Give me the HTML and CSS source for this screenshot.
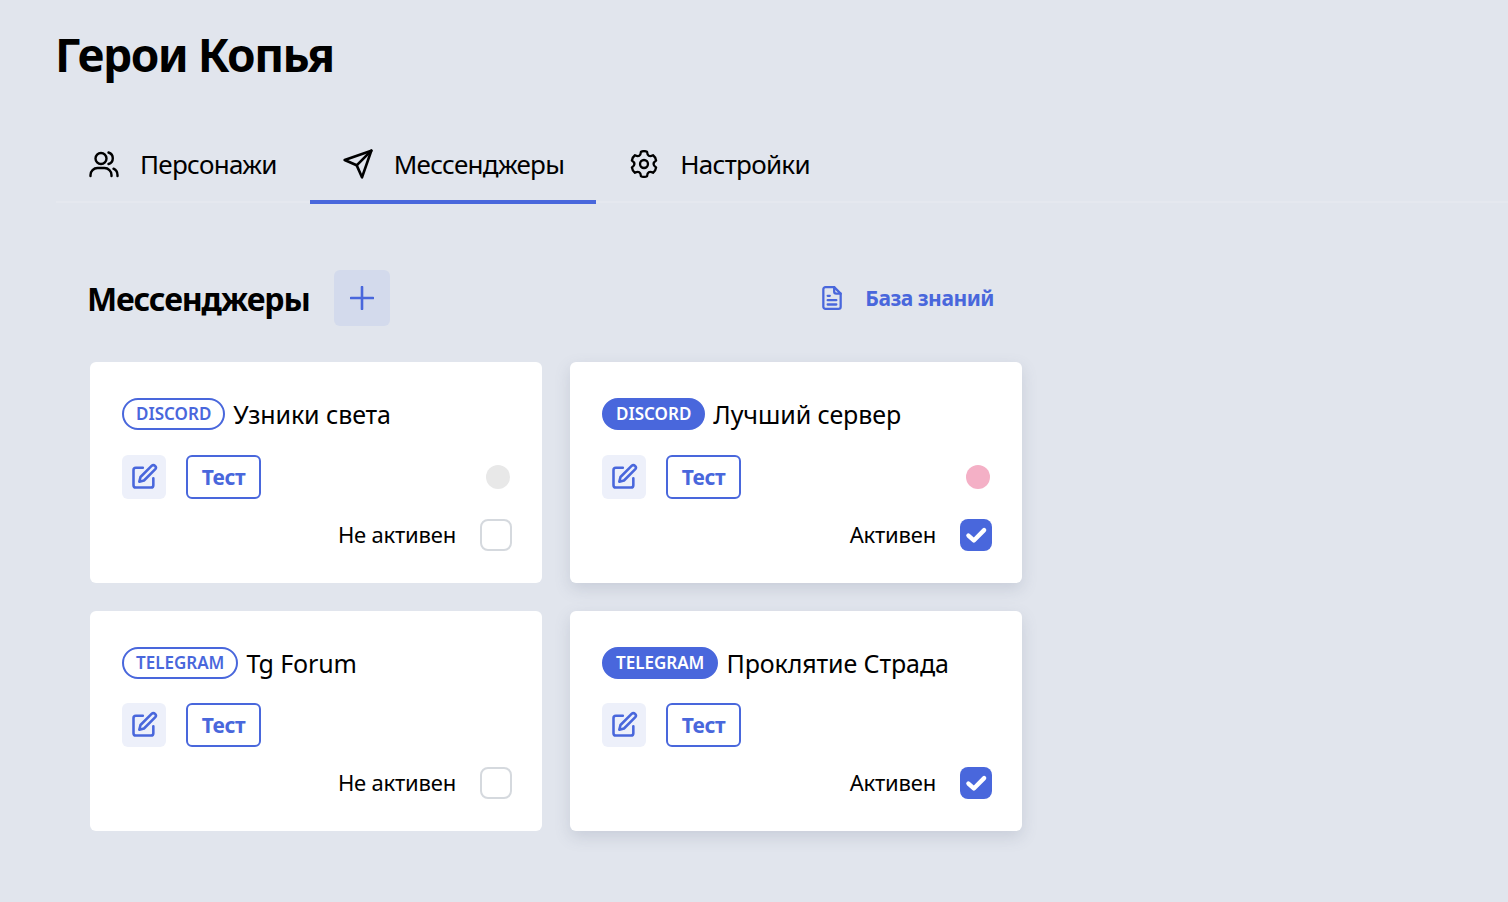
FILE: index.html
```html
<!DOCTYPE html>
<html>

<head>
    <meta charset="utf-8">
    <title>Герои Копья</title>
    <link rel="stylesheet" href="styles.css">
</head>
<body>

<h1 class="page_title">Герои Копья</h1>

<nav class="tabs">
    <a class="tab tab_first">
        <svg class="tab_icon" viewBox="0 0 32 32"><circle cx="13" cy="10.5" r="5.5"/><path d="M2.5 28v-1a7 7 0 0 1 7-7h7a7 7 0 0 1 7 7v1"/><path d="M20.5 4.5a6 6 0 0 1 0 11.5"/><path d="M29.5 28v-1a7 7 0 0 0-4-6.3"/></svg>
        <span>Персонажи</span>
    </a>
    <a class="tab tab_active">
        <svg class="tab_icon" viewBox="0 0 24 24"><path d="M22 2 11 13"/><path d="M22 2 15 22 11 13 2 9z"/></svg>
        <span>Мессенджеры</span>
    </a>
    <a class="tab">
        <svg class="tab_icon tab_gear" viewBox="0 0 24 24"><path d="M9.39 1.52Q12 .4 14.61 1.52Q15 6.8 19.77 4.49Q22.05 6.2 22.38 9.02Q18 12 22.38 14.98Q22.05 17.8 19.77 19.51Q15 17.2 14.61 22.48Q12 23.6 9.39 22.48Q9 17.2 4.23 19.51Q1.95 17.8 1.62 14.98Q6 12 1.62 9.02Q1.95 6.2 4.23 4.49Q9 6.8 9.39 1.52z"/><circle cx="12" cy="12" r="3.4"/></svg>
        <span>Настройки</span>
    </a>
</nav>

<section class="section">
    <div class="section_head">
        <h2 class="section_title">Мессенджеры</h2>
        <button class="add_btn">
            <svg viewBox="0 0 24 24"><path d="M12 1v22M1 12h22"/></svg>
        </button>
        <a class="docs_link">
            <svg viewBox="0 0 24 24"><path d="M4 4a2 2 0 0 1 2-2h8l6 6v12a2 2 0 0 1-2 2H6a2 2 0 0 1-2-2z"/><path d="M14 2v4a2 2 0 0 0 2 2h4"/><path d="M8 10h2M8 14h8M8 18h8"/></svg>
            <span>База знаний</span>
        </a>
    </div>

    <div class="cards">
        <div class="card">
            <div class="card_title">
                <span class="tag">DISCORD</span>
                <span class="card_name">Узники света</span>
            </div>
            <div class="card_actions">
                <button class="edit_btn"><svg viewBox="0 0 24 24"><path d="M11 4H5a2 2 0 0 0-2 2v13a2 2 0 0 0 2 2h13a2 2 0 0 0 2-2v-6"/><path d="M18.5 2.5a2.121 2.121 0 0 1 3 3L12 15l-4 1 1-4z"/></svg></button>
                <button class="test_btn">Тест</button>
                <span class="dot"></span>
            </div>
            <div class="card_state">
                <span class="state_label">Не активен</span>
                <span class="check"></span>
            </div>
        </div>

        <div class="card card_on">
            <div class="card_title">
                <span class="tag tag_on">DISCORD</span>
                <span class="card_name">Лучший сервер</span>
            </div>
            <div class="card_actions">
                <button class="edit_btn"><svg viewBox="0 0 24 24"><path d="M11 4H5a2 2 0 0 0-2 2v13a2 2 0 0 0 2 2h13a2 2 0 0 0 2-2v-6"/><path d="M18.5 2.5a2.121 2.121 0 0 1 3 3L12 15l-4 1 1-4z"/></svg></button>
                <button class="test_btn">Тест</button>
                <span class="dot dot_pink"></span>
            </div>
            <div class="card_state">
                <span class="state_label">Активен</span>
                <span class="check check_on"><svg viewBox="0 0 24 24"><path d="M5 12.5 10 17 19.5 7.5"/></svg></span>
            </div>
        </div>

        <div class="card card_low">
            <div class="card_title">
                <span class="tag">TELEGRAM</span>
                <span class="card_name">Tg Forum</span>
            </div>
            <div class="card_actions">
                <button class="edit_btn"><svg viewBox="0 0 24 24"><path d="M11 4H5a2 2 0 0 0-2 2v13a2 2 0 0 0 2 2h13a2 2 0 0 0 2-2v-6"/><path d="M18.5 2.5a2.121 2.121 0 0 1 3 3L12 15l-4 1 1-4z"/></svg></button>
                <button class="test_btn">Тест</button>
            </div>
            <div class="card_state">
                <span class="state_label">Не активен</span>
                <span class="check"></span>
            </div>
        </div>

        <div class="card card_on card_low">
            <div class="card_title">
                <span class="tag tag_on">TELEGRAM</span>
                <span class="card_name">Проклятие Страда</span>
            </div>
            <div class="card_actions">
                <button class="edit_btn"><svg viewBox="0 0 24 24"><path d="M11 4H5a2 2 0 0 0-2 2v13a2 2 0 0 0 2 2h13a2 2 0 0 0 2-2v-6"/><path d="M18.5 2.5a2.121 2.121 0 0 1 3 3L12 15l-4 1 1-4z"/></svg></button>
                <button class="test_btn">Тест</button>
            </div>
            <div class="card_state">
                <span class="state_label">Активен</span>
                <span class="check check_on"><svg viewBox="0 0 24 24"><path d="M5 12.5 10 17 19.5 7.5"/></svg></span>
            </div>
        </div>
    </div>
</section>

</body>
</html>
```

FILE: styles.css
```css
body {
    margin: 0;
    height: 902px;
    overflow: hidden;
    background: #e1e5ed;
    color: #000000;
    font-family: "Noto Sans", sans-serif;
}

button {
    font-family: inherit;
    cursor: pointer;
}

svg {
    fill: none;
    stroke: currentColor;
    stroke-linecap: round;
    stroke-linejoin: round;
}

.page_title {
    margin: 0;
    padding: 24px 0 0 55px;
    height: 130px;
    box-sizing: border-box;
    font-size: 46px;
    line-height: 60px;
    font-weight: 700;
    letter-spacing: -1.5px;
}

.tabs {
    display: flex;
    margin-left: 56px;
    height: 73px;
    box-sizing: border-box;
    border-bottom: 2px solid #e5e8ef;
}

.tab {
    display: flex;
    align-items: center;
    gap: 20px;
    height: 74px;
    padding: 0 32px 6px;
    box-sizing: border-box;
    font-size: 26px;
    letter-spacing: -0.7px;
}

.tab_first {
    padding-right: 33px;
}

.tab_icon {
    width: 32px;
    height: 32px;
    stroke-width: 2.4;
}

.tab_active {
    padding-bottom: 2px;
    border-bottom: 4px solid #4967dc;
}

.tab_active .tab_icon {
    stroke-width: 2;
}

.tab_gear {
    width: 28px;
    height: 28px;
    margin: 0 2px;
    stroke-width: 2;
}

.section {
    padding: 67px 0 0 88px;
}

.section_head {
    display: flex;
    align-items: center;
    width: 906px;
    height: 56px;
}

.section_title {
    margin: 0 24px 0 -1px;
    font-size: 32px;
    font-weight: 700;
    letter-spacing: -1.15px;
}

.add_btn {
    display: flex;
    align-items: center;
    justify-content: center;
    width: 56px;
    height: 56px;
    padding: 0;
    border: none;
    border-radius: 6px;
    background: #d3daec;
    color: #4967dc;
}

.add_btn svg {
    width: 24px;
    height: 24px;
    stroke-width: 2.6;
}

.docs_link {
    display: flex;
    align-items: center;
    gap: 20px;
    margin-left: auto;
    color: #4967dc;
    font-size: 21px;
    font-weight: 700;
    letter-spacing: -0.5px;
}

.docs_link svg {
    width: 26px;
    height: 26px;
    stroke-width: 2.1;
}

.cards {
    display: grid;
    grid-template-columns: 452px 452px;
    gap: 28px;
    margin: 36px 0 0 2px;
}

.card {
    box-sizing: border-box;
    height: 221px;
    padding: 36px 30px 0 32px;
    background: #ffffff;
    border-radius: 6px;
}

.card_low {
    height: 220px;
}

.card_low .card_actions {
    margin-top: 24px;
}

.card_on {
    box-shadow: 0 6px 16px rgba(90, 100, 130, 0.18);
}

.card_title {
    display: flex;
    align-items: center;
    gap: 8px;
    height: 32px;
}

.card_name {
    font-size: 25px;
    letter-spacing: -0.1px;
}

.tag {
    display: flex;
    align-items: center;
    height: 32px;
    padding: 0 12px 2px;
    box-sizing: border-box;
    border: 2px solid #4967dc;
    border-radius: 16px;
    color: #4967dc;
    font-size: 17px;
    font-weight: 600;
}

.tag_on {
    background: #4967dc;
    color: #ffffff;
}

.card_actions {
    display: flex;
    align-items: center;
    margin-top: 25px;
    height: 44px;
}

.edit_btn {
    display: flex;
    align-items: center;
    justify-content: center;
    width: 44px;
    height: 44px;
    padding: 0;
    border: none;
    border-radius: 6px;
    background: #edf0fa;
    color: #4967dc;
}

.edit_btn svg {
    width: 28px;
    height: 28px;
    stroke-width: 2.2;
}

.test_btn {
    width: 75px;
    height: 44px;
    margin-left: 20px;
    padding: 0;
    background: #ffffff;
    border: 2px solid #4967dc;
    border-radius: 6px;
    color: #4967dc;
    font-size: 21px;
    font-weight: 700;
    letter-spacing: -0.4px;
}

.dot {
    width: 24px;
    height: 24px;
    margin-left: auto;
    margin-right: 2px;
    border-radius: 50%;
    background: #e8e8e8;
}

.dot_pink {
    background: #f4b0c6;
}

.card_state {
    display: flex;
    align-items: center;
    justify-content: flex-end;
    gap: 24px;
    margin-top: 20px;
    height: 32px;
    font-size: 22px;
    letter-spacing: -0.2px;
}

.state_label {
    margin-bottom: 2px;
}

.check {
    width: 32px;
    height: 32px;
    box-sizing: border-box;
    border: 2px solid #d5d9de;
    border-radius: 8px;
}

.check_on {
    display: flex;
    align-items: center;
    justify-content: center;
    background: #4967dc;
    border: none;
    color: #ffffff;
}

.check_on svg {
    width: 26px;
    height: 26px;
    stroke-width: 4;
}
```
